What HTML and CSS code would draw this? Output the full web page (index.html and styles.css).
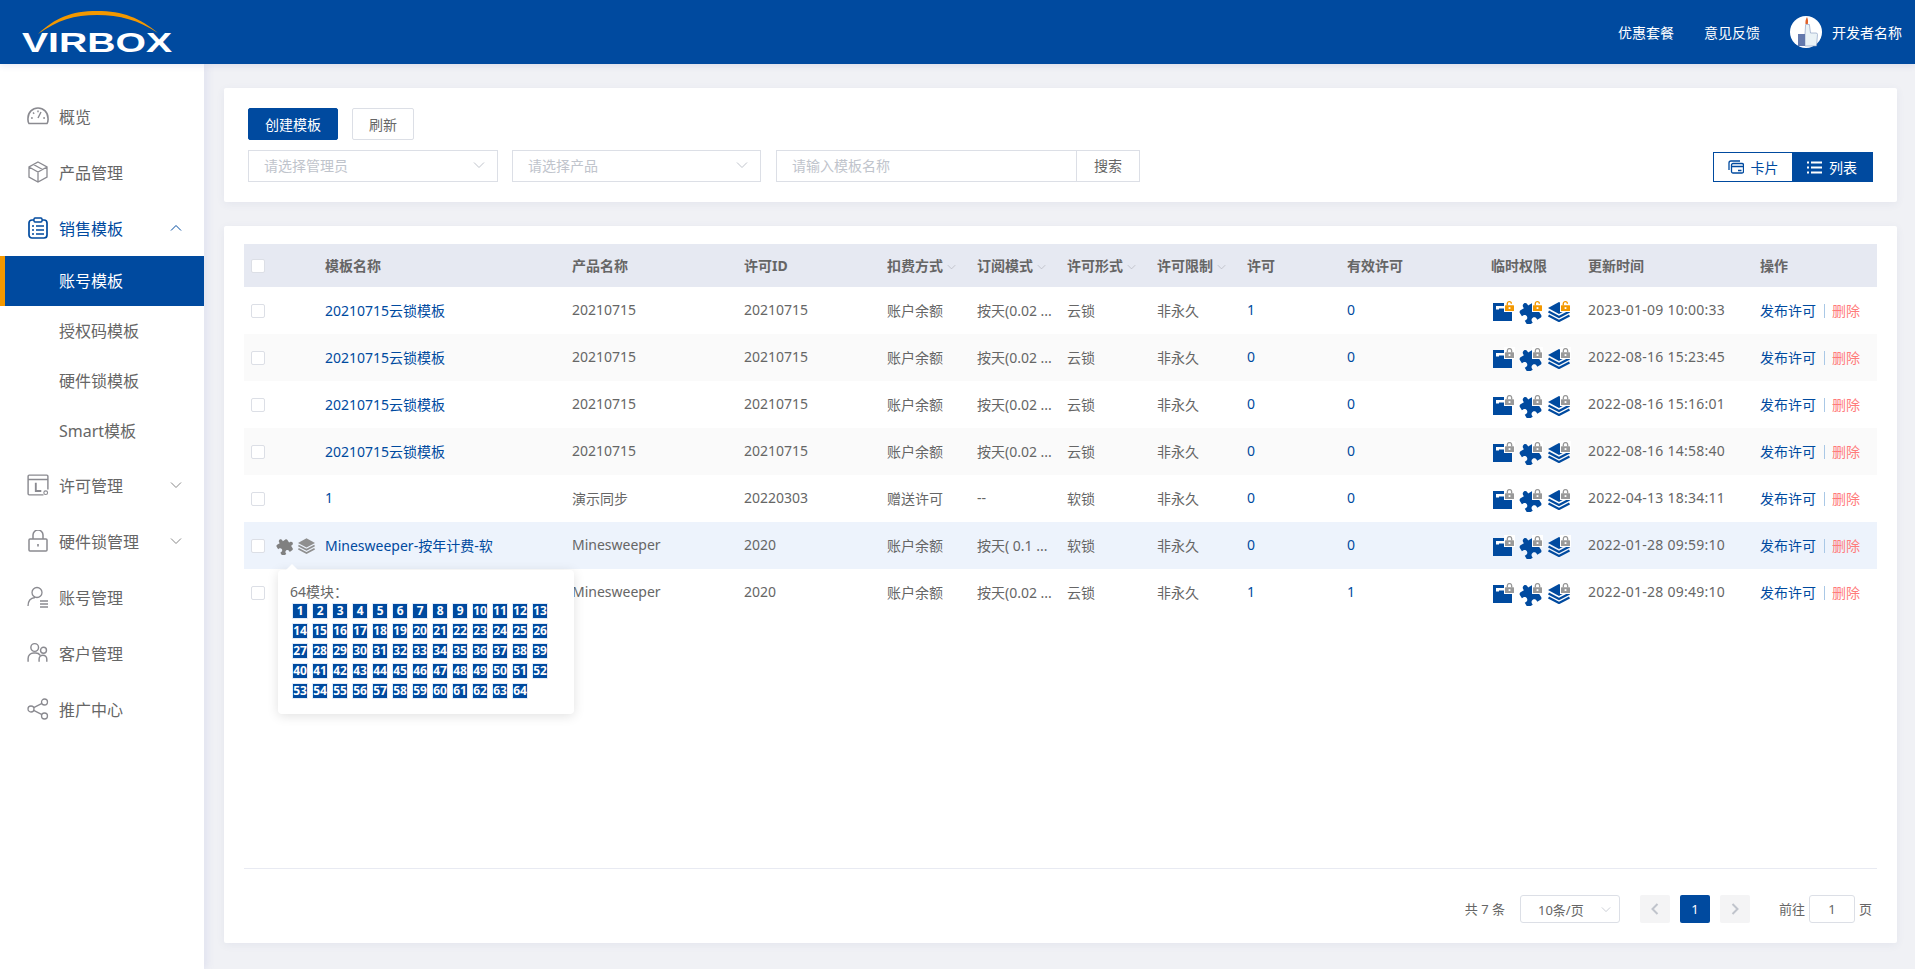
FILE: index.html
```html
<!DOCTYPE html>
<html lang="zh">
<head>
<meta charset="utf-8">
<title>Virbox</title>
<link rel="stylesheet" href="styles.css">
</head>
<body>
<svg class="defs" width="0" height="0">
  <symbol id="chev" viewBox="0 0 12 8"><path d="M1 1.5 6 6.5 11 1.5" fill="none" stroke="currentColor" stroke-width="1"/></symbol>
  <symbol id="puzzle" viewBox="0 0 24 24"><path transform="rotate(-32 12 12)" fill="currentColor" d="M20.5 11H19V7c0-1.1-.9-2-2-2h-4V3.5C13 2.12 11.88 1 10.5 1S8 2.12 8 3.5V5H4c-1.1 0-1.99.9-1.99 2v3.8H3.5c1.49 0 2.7 1.21 2.7 2.7s-1.21 2.7-2.7 2.7H2V20c0 1.1.9 2 2 2h3.8v-1.5c0-1.49 1.21-2.7 2.7-2.7 1.49 0 2.7 1.21 2.7 2.7V22H17c1.1 0 2-.9 2-2v-4h1.5c1.38 0 2.5-1.12 2.5-2.5S21.88 11 20.5 11z"/></symbol>
  <symbol id="layers" viewBox="0 0 22 20"><path fill="currentColor" d="M11 0 22 6 11 12 0 6z"/><path fill="none" stroke="currentColor" stroke-width="2.2" d="M0.5 9.500 11 15 21.500 9.500M0.500 13.500 11 19 21.500 13.500"/></symbol>
  <symbol id="lock-open" viewBox="0 0 10 11"><rect y="4.6" width="10" height="6.4" rx=".6" fill="#f39800"/><path d="M2.500 5V3a2.300 2.300 0 0 1 4.600 0" fill="none" stroke="#f39800" stroke-width="1.500"/><rect x="4" y="6.800" width="2" height="2" fill="#fff"/></symbol>
  <symbol id="lock-closed" viewBox="0 0 10 11"><rect y="4.6" width="10" height="6.4" rx=".6" fill="#999"/><path d="M2.600 5V3a2.400 2.400 0 0 1 4.800 0V5" fill="none" stroke="#999" stroke-width="1.500"/><rect x="4" y="6.800" width="2" height="2" fill="#fff"/></symbol>
  <symbol id="folder" viewBox="0 0 19 19"><path fill="#004a9f" d="M0 1h12v7h7v11H0z"/><path fill="#fff" d="M3 4h8v2.400H6v1.200H3z"/></symbol>
</svg>

<header class="topbar">
  <div class="logo">
    <svg width="150" height="42" viewBox="0 0 150 42">
      <path d="M16 23C33 7 49 0 75 0s43 7 61 22C116 9 98 4 75 4S36 9 16 23z" fill="#f39800"/>
      <text x="0" y="41" class="logo-text" textLength="150" lengthAdjust="spacingAndGlyphs">VIRBOX</text>
    </svg>
  </div>
  <nav class="topnav">
    <a>优惠套餐</a>
    <a>意见反馈</a>
    <span class="user">
      <svg class="avatar" width="32" height="32" viewBox="0 0 32 32">
        <circle cx="16" cy="16" r="16" fill="#fff"/>
        <path d="M17 1c1.200 2.500 1.200 4.500.8 7h-2.300c-.3-3 .2-4.500 1.500-7z" fill="#e0612a"/>
        <path d="M15 18l.6-9.500h3.800l1.100 8.500h5.500a1.500 1.500 0 0 1 1.500 1.500L26.500 30H15z" fill="#eaf2f6" stroke="#8296bd" stroke-width=".6"/>
        <rect x="8" y="18" width="7" height="12" fill="#6479ac"/>
      </svg>
      开发者名称
    </span>
  </nav>
</header>

<div class="layout">
  <aside class="sidebar">
    <ul class="menu">
      <li class="item">
        <svg class="mi" viewBox="0 0 22 22"><path d="M2 18.500C.5 16.500 1 14 1 13a10 10 0 0 1 20 0c0 1 .5 3.500-1 5.500z" fill="none" stroke="currentColor" stroke-width="1.600"/><path d="M11 13 14 7M4 13h1.800M16.200 13H18M6 7.500l1.200 1.200M11 5.500v1.800" fill="none" stroke="currentColor" stroke-width="1.400"/></svg>
        <span>概览</span>
      </li>
      <li class="item">
        <svg class="mi" viewBox="0 0 20 22"><path d="M10 1 19 6v10l-9 5-9-5V6zM1 6l9 5 9-5M10 11v10M5.500 3.500l9 5" fill="none" stroke="currentColor" stroke-width="1.300"/></svg>
        <span>产品管理</span>
      </li>
      <li class="item active-parent">
        <svg class="mi" viewBox="0 0 20 22"><rect x="1" y="3" width="18" height="18" rx="3" fill="none" stroke="currentColor" stroke-width="1.700"/><rect x="6" y="1" width="8" height="4" rx="1" fill="#fff" stroke="currentColor" stroke-width="1.400"/><path d="M4 9h2M8 9h8M4 13h2M8 13h8M4 17h2M8 17h8" stroke="currentColor" stroke-width="1.500"/></svg>
        <span>销售模板</span>
        <svg class="caret up"><use href="#chev"/></svg>
      </li>
    </ul>
    <ul class="submenu">
      <li class="sub selected">账号模板</li>
      <li class="sub">授权码模板</li>
      <li class="sub">硬件锁模板</li>
      <li class="sub">Smart模板</li>
    </ul>
    <ul class="menu">
      <li class="item">
        <svg class="mi" viewBox="0 0 20 20"><path d="M15 19H2a1 1 0 0 1-1-1V2a1 1 0 0 1 1-1h16a1 1 0 0 1 1 1v12M1 5h18" fill="none" stroke="currentColor" stroke-width="1.300"/><path d="M8 8v7.500h5" fill="none" stroke="currentColor" stroke-width="1.700"/><circle cx="17" cy="17" r="1.700" fill="none" stroke="currentColor"/></svg>
        <span>许可管理</span>
        <svg class="caret"><use href="#chev"/></svg>
      </li>
      <li class="item">
        <svg class="mi" viewBox="0 0 20 22"><rect x="1" y="9" width="18" height="12" rx="1" fill="none" stroke="currentColor" stroke-width="1.500"/><path d="M5 9V5a5 5 0 0 1 10 0v4" fill="none" stroke="currentColor" stroke-width="1.500"/><path d="M10 14v2.500" stroke="currentColor" stroke-width="1.600"/></svg>
        <span>硬件锁管理</span>
        <svg class="caret"><use href="#chev"/></svg>
      </li>
      <li class="item">
        <svg class="mi" viewBox="0 0 22 22"><circle cx="10" cy="6.500" r="5" fill="none" stroke="currentColor" stroke-width="1.300"/><path d="M1 20c0-5 3-8 7-8.500M13 15h8M13 18h8M13 21h8" fill="none" stroke="currentColor" stroke-width="1.300"/></svg>
        <span>账号管理</span>
      </li>
      <li class="item">
        <svg class="mi" viewBox="0 0 20 20"><circle cx="7" cy="5" r="3.500" fill="none" stroke="currentColor" stroke-width="1.300"/><circle cx="15" cy="7.500" r="2.700" fill="none" stroke="currentColor" stroke-width="1.300"/><path d="M1 18v-3a5 5 0 0 1 5-5h2a5 5 0 0 1 4 2M11 18v-2.500a3.500 3.500 0 0 1 7 0V18" fill="none" stroke="currentColor" stroke-width="1.300"/></svg>
        <span>客户管理</span>
      </li>
      <li class="item">
        <svg class="mi" viewBox="0 0 22 22"><circle cx="4" cy="11" r="3" fill="none" stroke="currentColor" stroke-width="1.300"/><circle cx="17.500" cy="4" r="3" fill="none" stroke="currentColor" stroke-width="1.300"/><circle cx="17.500" cy="18" r="3" fill="none" stroke="currentColor" stroke-width="1.300"/><path d="M6.700 9.600 15 5.400M6.700 12.400 15 16.600" stroke="currentColor" stroke-width="1.300"/></svg>
        <span>推广中心</span>
      </li>
    </ul>
  </aside>

  <main class="content">
    <section class="card toolbar">
      <div class="tool-left">
        <div class="btn-row">
          <button class="btn primary">创建模板</button>
          <button class="btn">刷新</button>
        </div>
        <div class="filter-row">
          <div class="select s-admin"><span>请选择管理员</span><svg class="caret"><use href="#chev"/></svg></div>
          <div class="select s-prod"><span>请选择产品</span><svg class="caret"><use href="#chev"/></svg></div>
          <div class="search"><span>请输入模板名称</span><b>搜索</b></div>
        </div>
      </div>
      <div class="view-toggle">
        <span class="vt">
          <svg width="16" height="14" viewBox="0 0 16 14"><path d="M1 10V3a2 2 0 0 1 2-2h9" fill="none" stroke="currentColor" stroke-width="1.300"/><rect x="3.500" y="3.500" width="12" height="9.500" rx="1.500" fill="none" stroke="currentColor" stroke-width="1.300"/><path d="M4 6.500h11M10 10.500h3.500" stroke="currentColor" stroke-width="1.300"/></svg>
          卡片
        </span>
        <span class="vt on">
          <svg width="15" height="13" viewBox="0 0 15 13"><path d="M0 1.500h2M4 1.500h11M0 6.500h2M4 6.500h11M0 11.500h2M4 11.500h11" stroke="currentColor" stroke-width="2"/></svg>
          列表
        </span>
      </div>
    </section>

    <section class="card listing">
      <div class="table-area">
        <table class="grid">
          <colgroup>
            <col class="c1"><col class="c2"><col class="c3"><col class="c4"><col class="c5"><col class="c6"><col class="c7"><col class="c8"><col class="c9"><col class="c10"><col class="c11"><col class="c12"><col class="c13">
          </colgroup>
          <thead>
            <tr>
              <th class="chk"><i class="box"></i></th>
              <th>模板名称</th><th>产品名称</th><th>许可ID</th>
              <th>扣费方式<svg class="fil"><use href="#chev"/></svg></th>
              <th>订阅模式<svg class="fil"><use href="#chev"/></svg></th>
              <th>许可形式<svg class="fil"><use href="#chev"/></svg></th>
              <th>许可限制<svg class="fil"><use href="#chev"/></svg></th>
              <th>许可</th><th>有效许可</th><th>临时权限</th><th>更新时间</th><th>操作</th>
            </tr>
          </thead>
          <tbody>
            <tr>
              <td class="chk"><i class="box"></i></td>
              <td class="lnk">20210715云锁模板</td><td>20210715</td><td>20210715</td><td>账户余额</td><td>按天(0.02 ...</td><td>云锁</td><td>非永久</td><td class="lnk">1</td><td class="lnk">0</td>
              <td><div class="perm">
                <span class="pi"><svg class="p-f"><use href="#folder"/></svg><svg class="p-l"><use href="#lock-open"/></svg></span>
                <span class="pi"><svg class="p-z"><use href="#puzzle"/></svg><svg class="p-l"><use href="#lock-open"/></svg></span>
                <span class="pi"><svg class="p-s"><use href="#layers"/></svg><svg class="p-l"><use href="#lock-open"/></svg></span>
              </div></td>
              <td class="time">2023-01-09 10:00:33</td>
              <td><a class="lnk">发布许可</a><i class="sep"></i><a class="del">删除</a></td>
            </tr>
            <tr class="alt">
              <td class="chk"><i class="box"></i></td>
              <td class="lnk">20210715云锁模板</td><td>20210715</td><td>20210715</td><td>账户余额</td><td>按天(0.02 ...</td><td>云锁</td><td>非永久</td><td class="lnk">0</td><td class="lnk">0</td>
              <td><div class="perm">
                <span class="pi"><svg class="p-f"><use href="#folder"/></svg><svg class="p-l"><use href="#lock-closed"/></svg></span>
                <span class="pi"><svg class="p-z"><use href="#puzzle"/></svg><svg class="p-l"><use href="#lock-closed"/></svg></span>
                <span class="pi"><svg class="p-s"><use href="#layers"/></svg><svg class="p-l"><use href="#lock-closed"/></svg></span>
              </div></td>
              <td class="time">2022-08-16 15:23:45</td>
              <td><a class="lnk">发布许可</a><i class="sep"></i><a class="del">删除</a></td>
            </tr>
            <tr>
              <td class="chk"><i class="box"></i></td>
              <td class="lnk">20210715云锁模板</td><td>20210715</td><td>20210715</td><td>账户余额</td><td>按天(0.02 ...</td><td>云锁</td><td>非永久</td><td class="lnk">0</td><td class="lnk">0</td>
              <td><div class="perm">
                <span class="pi"><svg class="p-f"><use href="#folder"/></svg><svg class="p-l"><use href="#lock-closed"/></svg></span>
                <span class="pi"><svg class="p-z"><use href="#puzzle"/></svg><svg class="p-l"><use href="#lock-closed"/></svg></span>
                <span class="pi"><svg class="p-s"><use href="#layers"/></svg><svg class="p-l"><use href="#lock-closed"/></svg></span>
              </div></td>
              <td class="time">2022-08-16 15:16:01</td>
              <td><a class="lnk">发布许可</a><i class="sep"></i><a class="del">删除</a></td>
            </tr>
            <tr class="alt">
              <td class="chk"><i class="box"></i></td>
              <td class="lnk">20210715云锁模板</td><td>20210715</td><td>20210715</td><td>账户余额</td><td>按天(0.02 ...</td><td>云锁</td><td>非永久</td><td class="lnk">0</td><td class="lnk">0</td>
              <td><div class="perm">
                <span class="pi"><svg class="p-f"><use href="#folder"/></svg><svg class="p-l"><use href="#lock-closed"/></svg></span>
                <span class="pi"><svg class="p-z"><use href="#puzzle"/></svg><svg class="p-l"><use href="#lock-closed"/></svg></span>
                <span class="pi"><svg class="p-s"><use href="#layers"/></svg><svg class="p-l"><use href="#lock-closed"/></svg></span>
              </div></td>
              <td class="time">2022-08-16 14:58:40</td>
              <td><a class="lnk">发布许可</a><i class="sep"></i><a class="del">删除</a></td>
            </tr>
            <tr>
              <td class="chk"><i class="box"></i></td>
              <td class="lnk">1</td><td>演示同步</td><td>20220303</td><td>赠送许可</td><td>--</td><td>软锁</td><td>非永久</td><td class="lnk">0</td><td class="lnk">0</td>
              <td><div class="perm">
                <span class="pi"><svg class="p-f"><use href="#folder"/></svg><svg class="p-l"><use href="#lock-closed"/></svg></span>
                <span class="pi"><svg class="p-z"><use href="#puzzle"/></svg><svg class="p-l"><use href="#lock-closed"/></svg></span>
                <span class="pi"><svg class="p-s"><use href="#layers"/></svg><svg class="p-l"><use href="#lock-closed"/></svg></span>
              </div></td>
              <td class="time">2022-04-13 18:34:11</td>
              <td><a class="lnk">发布许可</a><i class="sep"></i><a class="del">删除</a></td>
            </tr>
            <tr class="hover">
              <td class="chk anchor">
                <div class="chk-icons">
                  <i class="box"></i>
                  <svg class="g-z"><use href="#puzzle"/></svg>
                  <svg class="g-s"><use href="#layers"/></svg>
                </div>
                <div class="popover">
                  <p class="pop-title">64模块：</p>
                  <div class="mods">
                    <span>1</span><span>2</span><span>3</span><span>4</span><span>5</span><span>6</span><span>7</span><span>8</span><span>9</span><span>10</span><span>11</span><span>12</span><span>13</span>
                    <span>14</span><span>15</span><span>16</span><span>17</span><span>18</span><span>19</span><span>20</span><span>21</span><span>22</span><span>23</span><span>24</span><span>25</span><span>26</span>
                    <span>27</span><span>28</span><span>29</span><span>30</span><span>31</span><span>32</span><span>33</span><span>34</span><span>35</span><span>36</span><span>37</span><span>38</span><span>39</span>
                    <span>40</span><span>41</span><span>42</span><span>43</span><span>44</span><span>45</span><span>46</span><span>47</span><span>48</span><span>49</span><span>50</span><span>51</span><span>52</span>
                    <span>53</span><span>54</span><span>55</span><span>56</span><span>57</span><span>58</span><span>59</span><span>60</span><span>61</span><span>62</span><span>63</span><span>64</span>
                  </div>
                </div>
              </td>
              <td class="lnk">Minesweeper-按年计费-软</td><td>Minesweeper</td><td>2020</td><td>账户余额</td><td>按天( 0.1 ...</td><td>软锁</td><td>非永久</td><td class="lnk">0</td><td class="lnk">0</td>
              <td><div class="perm">
                <span class="pi"><svg class="p-f"><use href="#folder"/></svg><svg class="p-l"><use href="#lock-closed"/></svg></span>
                <span class="pi"><svg class="p-z"><use href="#puzzle"/></svg><svg class="p-l"><use href="#lock-closed"/></svg></span>
                <span class="pi"><svg class="p-s"><use href="#layers"/></svg><svg class="p-l"><use href="#lock-closed"/></svg></span>
              </div></td>
              <td class="time">2022-01-28 09:59:10</td>
              <td><a class="lnk">发布许可</a><i class="sep"></i><a class="del">删除</a></td>
            </tr>
            <tr>
              <td class="chk"><i class="box"></i></td>
              <td class="lnk"></td><td>Minesweeper</td><td>2020</td><td>账户余额</td><td>按天(0.02 ...</td><td>云锁</td><td>非永久</td><td class="lnk">1</td><td class="lnk">1</td>
              <td><div class="perm">
                <span class="pi"><svg class="p-f"><use href="#folder"/></svg><svg class="p-l"><use href="#lock-closed"/></svg></span>
                <span class="pi"><svg class="p-z"><use href="#puzzle"/></svg><svg class="p-l"><use href="#lock-closed"/></svg></span>
                <span class="pi"><svg class="p-s"><use href="#layers"/></svg><svg class="p-l"><use href="#lock-closed"/></svg></span>
              </div></td>
              <td class="time">2022-01-28 09:49:10</td>
              <td><a class="lnk">发布许可</a><i class="sep"></i><a class="del">删除</a></td>
            </tr>
          </tbody>
        </table>
      </div>
      <footer class="pager">
        <span class="total">共 7 条</span>
        <div class="size"><span>10条/页</span><svg class="caret"><use href="#chev"/></svg></div>
        <span class="pg off"><svg viewBox="0 0 10 14"><path d="M7.500 2 2.500 7l5 5" fill="none" stroke="currentColor" stroke-width="2"/></svg></span>
        <span class="pg cur">1</span>
        <span class="pg off"><svg viewBox="0 0 10 14"><path d="M2.500 2l5 5-5 5" fill="none" stroke="currentColor" stroke-width="2"/></svg></span>
        <span class="goto">前往<b>1</b>页</span>
      </footer>
    </section>
  </main>
</div>
</body>
</html>
```

FILE: styles.css
```css
* { box-sizing: border-box; }
html, body { margin: 0; height: 100%; overflow: hidden; }
body {
  font-family: "Noto Sans", "Noto Sans CJK SC", sans-serif;
  font-size: 14px;
  color: #666;
  background: #f0f1f5;
  display: flex;
  flex-direction: column;
}
ul { list-style: none; margin: 0; padding: 0; }
.defs { position: absolute; }

.topbar {
  height: 64px;
  flex: none;
  background: #004a9f;
  display: flex;
  justify-content: space-between;
  align-items: center;
  padding: 0 13px 0 22px;
  position: relative;
  z-index: 2;
  box-shadow: 0 2px 6px rgba(80, 90, 170, .12);
}
.logo { height: 42px; }
.logo svg { display: block; overflow: visible; }
.logo-text { font-family: "Liberation Sans", sans-serif; font-weight: 700; font-size: 28px; fill: #fff; }
.topnav { display: flex; align-items: center; color: #fff; }
.topnav a { margin-right: 30px; }
.user { display: flex; align-items: center; gap: 10px; }
.avatar { display: block; }

.layout { flex: 1; display: flex; min-height: 0; }
.sidebar {
  width: 204px;
  flex: none;
  background: #fff;
  padding-top: 25px;
  box-shadow: 3px 0 8px rgba(90, 100, 200, .1);
  position: relative;
}
.item {
  height: 56px;
  display: flex;
  align-items: center;
  padding: 0 0 2px 27px;
  font-size: 16px;
  position: relative;
  color: #666;
}
.item span { margin-left: 10px; }
.mi { width: 22px; height: 22px; color: #8a8a90; flex: none; }
.active-parent, .active-parent .mi { color: #004a9f; }
.caret { width: 12px; height: 8px; color: #999; }
.item .caret { position: absolute; right: 22px; top: 23px; color: #888; }
.item .caret.up { color: #004a9f; transform: rotate(180deg); }
.submenu { margin: -1px 0 2px; }
.sub { height: 50px; line-height: 50px; padding-left: 59px; font-size: 16px; color: #666; }
.sub.selected { background: #004a9f; color: #fff; border-left: 5px solid #f39800; padding-left: 54px; }

.content {
  flex: 1;
  min-width: 0;
  padding: 24px 18px 0 20px;
  display: flex;
  flex-direction: column;
  gap: 24px;
}
.card { background: #fff; border-radius: 2px; box-shadow: 0 2px 8px rgba(70, 80, 140, .07); }
.toolbar {
  height: 114px;
  padding: 20px 24px;
  display: flex;
  justify-content: space-between;
  align-items: flex-end;
}
.btn-row { display: flex; gap: 14px; }
.btn {
  font: inherit;
  height: 32px;
  width: 62px;
  padding: 0;
  color: #666;
  background: #fff;
  border: 1px solid #dcdfe6;
  border-radius: 2px;
}
.btn.primary { width: 90px; background: #004a9f; border-color: #004a9f; color: #fff; }
.filter-row { display: flex; margin-top: 10px; }
.select, .search {
  height: 32px;
  border: 1px solid #dcdfe6;
  color: #c0c4cc;
  display: flex;
  align-items: center;
  background: #fff;
  padding-bottom: 2px;
}
.select { padding-left: 15px; padding-right: 12px; justify-content: space-between; }
.s-admin { width: 250px; margin-right: 14px; }
.s-prod { width: 249px; margin-right: 15px; }
.select .caret { color: #c0c4cc; }
.search { width: 364px; padding-left: 15px; padding-bottom: 0; justify-content: space-between; }
.search span { padding-bottom: 2px; }
.search b { font-weight: 400; color: #666; width: 63px; text-align: center; height: 30px; line-height: 29px; border-left: 1px solid #dcdfe6; }

.view-toggle { display: flex; height: 30px; width: 160px; border: 1px solid #004a9f; }
.vt { flex: 0 0 78px; display: flex; align-items: center; justify-content: center; gap: 7px; color: #004a9f; }
.vt.on { flex: 1; background: #004a9f; color: #fff; }

.listing { height: 717px; padding: 18px 20px 20px; display: flex; flex-direction: column; }
.table-area { flex: 1; min-height: 0; }
.grid { width: 1633px; table-layout: fixed; border-collapse: collapse; }
.c1 { width: 71px; } .c2 { width: 247px; } .c3 { width: 172px; } .c4 { width: 143px; }
.c5, .c6, .c7, .c8 { width: 90px; }
.c9 { width: 100px; } .c10 { width: 144px; } .c11 { width: 97px; } .c12 { width: 172px; } .c13 { width: 127px; }
th { height: 43px; background: #e6e9f2; text-align: left; font-weight: 700; color: #666; padding: 0 0 2px 10px; white-space: nowrap; }
td { height: 47px; padding: 0 0 2px 10px; white-space: nowrap; color: #666; }
th.chk, td.chk { padding: 0 0 0 7px; }
.box { display: block; width: 14px; height: 14px; background: #fff; border: 1px solid #dcdfe6; border-radius: 2px; }
.fil { width: 9px; height: 6px; margin-left: 4px; color: #b5b8c0; vertical-align: 1px; }
.alt td { background: #fafafa; }
.hover td { background: #edf3fc; }
.lnk, td.lnk { color: #004a9f; }
.del { color: #ff7b7b; }
.sep { display: inline-block; width: 1px; height: 14px; background: #a9c8e6; margin: 0 7px 0 8px; vertical-align: -2px; }
.time { letter-spacing: .25px; }

.perm { display: flex; gap: 8px; padding-left: 2px; }
.pi { position: relative; display: block; width: 20px; height: 22px; }
.p-f { position: absolute; left: 0; top: 3px; width: 19px; height: 19px; }
.p-z { position: absolute; left: -2px; top: 1px; width: 24px; height: 24px; color: #004a9f; }
.p-s { position: absolute; left: -1px; top: 3px; width: 22px; height: 20px; color: #004a9f; }
.p-l { position: absolute; left: 12px; top: 2px; width: 9px; height: 10px; background: #fff; outline: 1px solid #fff; }

.anchor { position: relative; }
.chk-icons { display: flex; align-items: center; }
.g-z { width: 18px; height: 18px; color: #808080; margin-left: 11px; }
.g-s { width: 17px; height: 16px; color: #8f8f8f; margin-left: 4px; }
.popover {
  position: absolute;
  left: 34px;
  top: 48px;
  width: 296px;
  height: 144px;
  background: #fff;
  border-radius: 4px;
  box-shadow: 0 2px 12px rgba(0, 0, 0, .12);
  padding: 12px 12px 0;
  z-index: 3;
}
.popover::before {
  content: "";
  position: absolute;
  left: 8px;
  top: -6px;
  border: 6px solid transparent;
  border-top: 0;
  border-bottom-color: #fff;
}
.pop-title { margin: 0; line-height: 20px; height: 21px; color: #666; }
.mods { display: grid; grid-template-columns: repeat(13, 16px); gap: 4px; margin-left: 2px; }
.mods span {
  width: 16px;
  height: 16px;
  background: #004a9f;
  border: 1px solid #e3ecf8;
  color: #fff;
  font: 700 12px/13px "Noto Sans", sans-serif;
  letter-spacing: -.2px;
  text-align: center;
}

.pager {
  flex: none;
  height: 55px;
  border-top: 1px solid #e8eaf2;
  padding: 26px 5px 0 0;
  display: flex;
  align-items: flex-start;
  justify-content: flex-end;
  font-size: 13px;
}
.total { line-height: 28px; margin-right: 15px; }
.size { width: 100px; height: 28px; border: 1px solid #dcdfe6; border-radius: 3px; display: flex; align-items: center; justify-content: space-between; padding: 0 8px 0 17px; margin-right: 20px; }
.size .caret { color: #c0c4cc; width: 10px; height: 7px; }
.pg { width: 30px; height: 28px; border-radius: 2px; display: flex; align-items: center; justify-content: center; margin-right: 10px; }
.pg svg { width: 10px; height: 14px; }
.pg.off { background: #f4f4f5; color: #c0c4cc; }
.pg.cur { background: #004a9f; color: #fff; }
.goto { line-height: 28px; display: flex; margin-left: 19px; }
.goto b { font-weight: 400; display: block; width: 46px; height: 28px; border: 1px solid #dcdfe6; border-radius: 3px; text-align: center; line-height: 26px; margin: 0 4px; }
```
